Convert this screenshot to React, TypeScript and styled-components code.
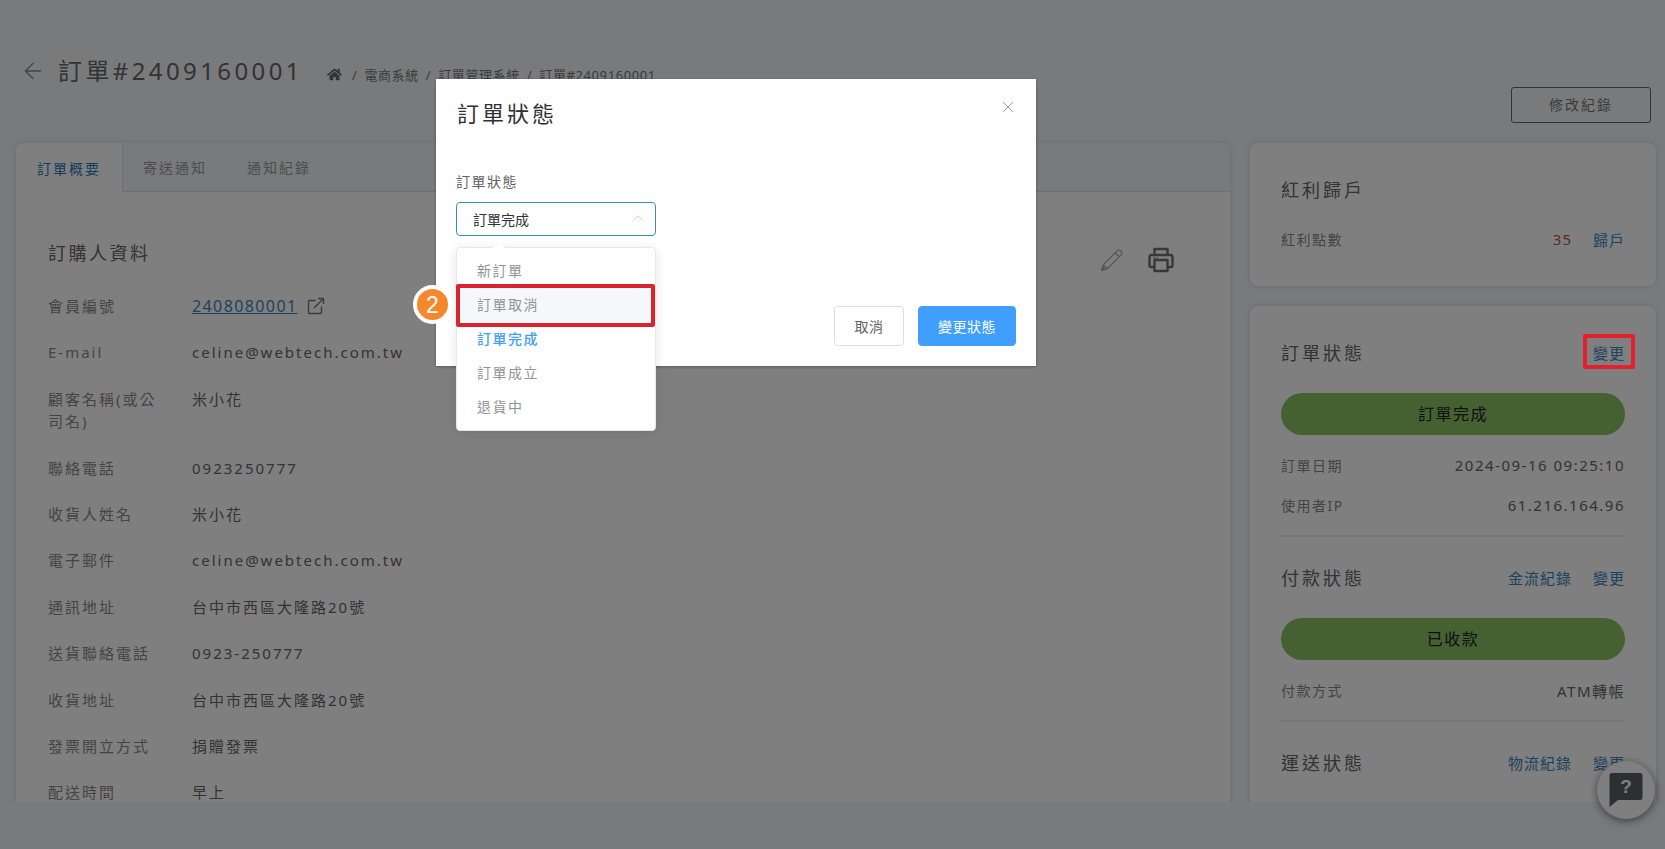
import React from 'react';
import styled, { createGlobalStyle } from 'styled-components';
import { ArrowLeft, ChevronUp, X } from 'lucide-react';
import { FaHome } from 'react-icons/fa';

const FONT = `"Noto Sans", "Noto Sans CJK TC", sans-serif`;

const GlobalStyle = createGlobalStyle`
  html, body {
    margin: 0;
    padding: 0;
    height: 100%;
    overflow: hidden;
    font-family: ${FONT};
    background: #f3f4f8;
  }
  * { box-sizing: border-box; }
`;

const Page = styled.div`
  position: relative;
  width: 1665px;
  height: 849px;
  overflow: hidden;
  background: #f3f4f8;
`;

const Viewport = styled.div`
  height: 802px;
  overflow: hidden;
  padding: 0 9px 0 16px;
`;

const Header = styled.header`
  display: flex;
  justify-content: space-between;
  align-items: flex-start;
  height: 143px;
  padding: 50px 5px 0 4px;
`;

const TitleRow = styled.div`
  display: flex;
  align-items: center;
  height: 42px;
`;

const BackIcon = styled(ArrowLeft)`
  width: 26px;
  height: 26px;
  color: #888;
  margin-right: 12px;
`;

const PageTitle = styled.h1`
  margin: 0 24px 0 0;
  font-size: 24px;
  line-height: 42px;
  font-weight: 400;
  letter-spacing: 3.4px;
  color: #666;
`;

const Breadcrumb = styled.nav`
  display: flex;
  align-items: center;
  gap: 7px;
  padding-top: 7px;
  font-size: 13px;
  letter-spacing: 0.6px;
  color: #777;
`;

const HomeIcon = styled(FaHome)`
  width: 15px;
  height: 15px;
  color: #666;
  margin-right: 3px;
`;

const OutlineButton = styled.button`
  width: 140px;
  height: 36px;
  margin-top: 37px;
  padding: 0 0 2px;
  border: 1px solid #666;
  border-radius: 3px;
  background: transparent;
  font-family: ${FONT};
  font-size: 14px;
  letter-spacing: 2px;
  color: #777;
`;

const Columns = styled.div`
  display: flex;
  gap: 20px;
  align-items: flex-start;
`;

const MainCard = styled.section`
  width: 1214px;
  flex: none;
  background: #fff;
  border-radius: 8px 8px 0 0;
  box-shadow: 0 0 6px rgba(0, 0, 0, 0.12);
`;

const TabBar = styled.div`
  display: flex;
  height: 49px;
  background: #f3f4f8;
  border-bottom: 1px solid #dcdfe6;
  border-radius: 8px 8px 0 0;
`;

const Tab = styled.div<{ $active?: boolean }>`
  display: flex;
  align-items: center;
  justify-content: center;
  height: ${(p) => (p.$active ? '49px' : '48px')};
  padding: ${(p) => (p.$active ? '0 21px' : '0 20px')};
  font-size: 14px;
  letter-spacing: 2px;
  color: ${(p) => (p.$active ? '#2a78b8' : '#999')};
  background: ${(p) => (p.$active ? '#fff' : 'transparent')};
  border-right: ${(p) => (p.$active ? '1px solid #dcdfe6' : 'none')};
  border-radius: ${(p) => (p.$active ? '8px 0 0 0' : '0')};
`;

const CardBody = styled.div`
  padding: 42px 32px 0;
`;

const SectionHeader = styled.div`
  display: flex;
  justify-content: space-between;
  align-items: center;
  height: 36px;
  margin-bottom: 13px;
`;

const SectionTitle = styled.h2`
  margin: 0;
  font-size: 18px;
  font-weight: 400;
  letter-spacing: 2.5px;
  color: #666;
`;

const ActionIcons = styled.div`
  display: flex;
  align-items: center;
  gap: 23px;
  padding-right: 24px;
  margin-top: 16px;
`;

const InfoRow = styled.div`
  display: flex;
  padding: 12px 0;
  font-size: 15px;
  line-height: 22.4px;
  letter-spacing: 2px;
`;

const InfoLabel = styled.div`
  width: 112px;
  margin-right: 32px;
  flex: none;
  color: #888;
`;

const InfoValue = styled.div`
  color: #666;
`;

const MemberLink = styled.a`
  display: inline-flex;
  align-items: center;
  gap: 9px;
  font-size: 16px;
  letter-spacing: 1.4px;
  color: #3a86c0;
  text-decoration: underline;
  svg {
    color: #777;
  }
`;

const Sidebar = styled.aside`
  width: 406px;
  flex: none;
  display: flex;
  flex-direction: column;
  gap: 20px;
`;

const SideCard = styled.section<{ $open?: boolean }>`
  background: #fff;
  border-radius: ${(p) => (p.$open ? '8px 8px 0 0' : '8px')};
  padding: 30px 31px ${(p) => (p.$open ? '40px' : '0')} 31px;
  min-height: 143px;
  box-shadow: 0 0 6px rgba(0, 0, 0, 0.12);
`;

const SideHeading = styled.div`
  display: flex;
  align-items: center;
  justify-content: space-between;
  height: 32px;
`;

const SideTitle = styled.h3`
  margin: 0;
  font-size: 18px;
  font-weight: 400;
  letter-spacing: 3px;
  color: #666;
`;

const LinkGroup = styled.div`
  display: flex;
  gap: 21px;
`;

const TextLink = styled.a`
  font-size: 15px;
  letter-spacing: 1px;
  color: #3a86c0;
`;

const SideRow = styled.div<{ $first?: boolean }>`
  display: flex;
  align-items: center;
  justify-content: space-between;
  height: 24px;
  margin-top: ${(p) => (p.$first ? '22px' : '16px')};
  font-size: 14px;
  letter-spacing: 1.5px;
  color: #888;
`;

const SideValue = styled.span`
  font-size: 15px;
  letter-spacing: 1.5px;
  color: #666;
`;

const RedPoints = styled.span`
  margin-right: 21px;
  font-size: 15px;
  letter-spacing: 1px;
  color: #c0504d;
`;

const PointsGroup = styled.div`
  display: flex;
  align-items: center;
`;

const StatusPill = styled.div`
  display: flex;
  align-items: center;
  justify-content: center;
  height: 42px;
  margin: 25px 0 18px;
  padding-bottom: 2px;
  border-radius: 21px;
  background: #8ac062;
  font-size: 16px;
  letter-spacing: 1.5px;
  color: #222;
  & + div {
    margin-top: 0;
  }
`;

const Divider = styled.hr`
  height: 2px;
  margin: 18px 0 24px;
  border: none;
  background: #eee;
`;

const HelpButton = styled.div`
  position: absolute;
  right: 10px;
  bottom: 30px;
  display: flex;
  align-items: center;
  justify-content: center;
  width: 58px;
  height: 58px;
  border-radius: 50%;
  background: #fff;
  box-shadow: 0 2px 8px rgba(0, 0, 0, 0.5);
`;

const Overlay = styled.div`
  position: absolute;
  inset: 0;
  padding: 79px 0 0 436px;
  background: rgba(0, 0, 0, 0.5);
`;

const Modal = styled.div`
  display: flex;
  flex-direction: column;
  width: 600px;
  height: 287px;
  padding: 15px 20px 20px;
  background: #fff;
  box-shadow: 0 1px 3px rgba(0, 0, 0, 0.3);
`;

const ModalHead = styled.div`
  display: flex;
  align-items: center;
  justify-content: space-between;
  height: 36px;
  margin-bottom: 41px;
`;

const ModalTitle = styled.h2`
  margin: 0 0 0 1px;
  font-size: 22px;
  font-weight: 400;
  letter-spacing: 3px;
  color: #303133;
`;

const CloseIcon = styled(X)`
  width: 18px;
  height: 18px;
  margin: -10px -1px 0 0;
  color: #909399;
`;

const FieldLabel = styled.label`
  font-size: 14px;
  line-height: 22px;
  letter-spacing: 1.5px;
  color: #606266;
`;

const SelectBox = styled.div`
  position: relative;
  width: 200px;
  margin-top: 9px;
`;

const SelectInput = styled.div`
  display: flex;
  align-items: center;
  justify-content: space-between;
  height: 34px;
  padding: 0 8px 0 16px;
  border: 1px solid #3c8dbc;
  border-radius: 4px;
  font-size: 14px;
  color: #303133;
`;

const SelectArrow = styled(ChevronUp)`
  width: 18px;
  height: 18px;
  margin-top: -3px;
  color: #c0c4cc;
`;

const Dropdown = styled.ul`
  position: absolute;
  top: 45px;
  left: 0;
  z-index: 2;
  width: 200px;
  margin: 0;
  padding: 6px 0;
  list-style: none;
  background: #fff;
  border: 1px solid #e4e7ed;
  border-radius: 4px;
  box-shadow: 0 2px 12px rgba(0, 0, 0, 0.1);
  &::before {
    content: '';
    position: absolute;
    top: -6px;
    left: 36px;
    border: 6px solid transparent;
    border-top: 0;
    border-bottom-color: #fff;
  }
`;

const Option = styled.li<{ $hover?: boolean; $selected?: boolean }>`
  position: relative;
  height: 34px;
  padding: 0 20px;
  font-size: 14px;
  line-height: 34px;
  letter-spacing: 1.5px;
  font-weight: ${(p) => (p.$selected ? 500 : 400)};
  color: ${(p) => (p.$selected ? '#409eff' : '#909399')};
  background: ${(p) => (p.$hover ? '#f5f7fa' : 'transparent')};
`;

const OptionMark = styled.span`
  position: absolute;
  inset: -4px 0 -5px -1px;
  border: 4px solid #d8242f;
  border-radius: 2px;
`;

const StepBadge = styled.span`
  position: absolute;
  top: -3px;
  left: -44px;
  display: flex;
  align-items: center;
  justify-content: center;
  width: 39px;
  height: 39px;
  border: 4px solid #fff;
  border-radius: 50%;
  background: #f7872c;
  font-family: "Liberation Sans", sans-serif;
  font-size: 23px;
  letter-spacing: 0;
  color: #fff;
`;

const ModalFooter = styled.div`
  display: flex;
  justify-content: flex-end;
  gap: 14px;
  margin-top: auto;
`;

const FooterButton = styled.button<{ $primary?: boolean }>`
  width: ${(p) => (p.$primary ? '98px' : '70px')};
  height: 40px;
  padding: 0;
  border: 1px solid ${(p) => (p.$primary ? '#409eff' : '#dcdfe6')};
  border-radius: 4px;
  background: ${(p) => (p.$primary ? '#409eff' : '#fff')};
  font-family: ${FONT};
  font-size: 14px;
  letter-spacing: 0.5px;
  color: ${(p) => (p.$primary ? '#fff' : '#606266')};
`;

const LinkMark = styled.span`
  position: absolute;
  left: 1583px;
  top: 334px;
  width: 52px;
  height: 35px;
  border: 4px solid #e3202c;
  border-radius: 2px;
`;

const infoRows = [
  ['E-mail', 'celine@webtech.com.tw'],
  ['顧客名稱(或公司名)', '米小花'],
  ['聯絡電話', '0923250777'],
  ['收貨人姓名', '米小花'],
  ['電子郵件', 'celine@webtech.com.tw'],
  ['通訊地址', '台中市西區大隆路20號'],
  ['送貨聯絡電話', '0923-250777'],
  ['收貨地址', '台中市西區大隆路20號'],
  ['發票開立方式', '捐贈發票'],
  ['配送時間', '早上'],
];

const statusOptions = ['新訂單', '訂單取消', '訂單完成', '訂單成立', '退貨中'];

const PencilIcon = () => (
  <svg width="26" height="26" viewBox="0 0 28 28" fill="none" stroke="#aaa" strokeWidth="1.4" strokeLinejoin="round">
    <path d="M3 25l1.6-6L19.5 4.2a2.8 2.8 0 0 1 4 0l.3.3a2.8 2.8 0 0 1 0 4L9 23.4z" />
    <path d="M4.6 19l4.4 4.4M17.5 6.2l4.3 4.3" />
    <path d="M3 25l3.6-1 -2.6-2.6z" fill="#aaa" />
  </svg>
);

const PrinterIcon = () => (
  <svg width="26" height="26" viewBox="0 0 26 26" fill="none" stroke="#707070" strokeWidth="2.4" strokeLinejoin="round">
    <path d="M6.5 8V2h13v6" />
    <path d="M6.5 20H3a1.5 1.5 0 0 1-1.5-1.5V10A2 2 0 0 1 3.500 8h19a2 2 0 0 1 2 2v8.500A1.500 1.500 0 0 1 23 20h-3.500" />
    <rect x="6.500" y="13" width="13" height="11" />
    <path d="M5.500 11h2M9 11h1" strokeWidth="1.400" />
  </svg>
);

const ExternalIcon = () => (
  <svg width="18" height="18" viewBox="0 0 18 18" fill="none" stroke="currentColor" strokeWidth="1.400" strokeLinejoin="round">
    <path d="M8.500 3.500H2.500a1 1 0 0 0-1 1V15.500a1 1 0 0 0 1 1H13.500a1 1 0 0 0 1-1V9.500" />
    <path d="M7 11L16.500 1.500M11 1.500h5.500V7" />
  </svg>
);

const HelpIcon = () => (
  <svg width="34" height="34" viewBox="0 0 34 34">
    <path d="M3 0h28a2.500 2.500 0 0 1 2.500 2.500v22a2.500 2.500 0 0 1-2.500 2.500H9l-8.500 7V2.500A2.500 2.500 0 0 1 3 0z" fill="#5a6066" />
    <text x="17" y="20" textAnchor="middle" fontSize="19" fontWeight="700" fontFamily="Liberation Sans, sans-serif" fill="#fff">?</text>
  </svg>
);

const App: React.FC = () => {
  return (
    <Page>
      <GlobalStyle />
      <Viewport>
        <Header>
          <TitleRow>
            <BackIcon strokeWidth={1.2} />
            <PageTitle>訂單#2409160001</PageTitle>
            <Breadcrumb>
              <HomeIcon />
              <span>/</span>
              <span>電商系統</span>
              <span>/</span>
              <span>訂單管理系統</span>
              <span>/</span>
              <span>訂單#2409160001</span>
            </Breadcrumb>
          </TitleRow>
          <OutlineButton>修改紀錄</OutlineButton>
        </Header>
        <Columns>
          <MainCard>
            <TabBar>
              <Tab $active>訂單概要</Tab>
              <Tab>寄送通知</Tab>
              <Tab>通知紀錄</Tab>
            </TabBar>
            <CardBody>
              <SectionHeader>
                <SectionTitle>訂購人資料</SectionTitle>
                <ActionIcons>
                  <PencilIcon />
                  <PrinterIcon />
                </ActionIcons>
              </SectionHeader>
              <InfoRow>
                <InfoLabel>會員編號</InfoLabel>
                <InfoValue>
                  <MemberLink>
                    2408080001
                    <ExternalIcon />
                  </MemberLink>
                </InfoValue>
              </InfoRow>
              {infoRows.map(([label, value]) => (
                <InfoRow key={label + value}>
                  <InfoLabel>{label}</InfoLabel>
                  <InfoValue>{value}</InfoValue>
                </InfoRow>
              ))}
            </CardBody>
          </MainCard>
          <Sidebar>
            <SideCard>
              <SideHeading>
                <SideTitle>紅利歸戶</SideTitle>
              </SideHeading>
              <SideRow $first>
                <span>紅利點數</span>
                <PointsGroup>
                  <RedPoints>35</RedPoints>
                  <TextLink>歸戶</TextLink>
                </PointsGroup>
              </SideRow>
            </SideCard>
            <SideCard $open>
              <SideHeading>
                <SideTitle>訂單狀態</SideTitle>
                <LinkGroup>
                  <TextLink>變更</TextLink>
                </LinkGroup>
              </SideHeading>
              <StatusPill>訂單完成</StatusPill>
              <SideRow>
                <span>訂單日期</span>
                <SideValue>2024-09-16 09:25:10</SideValue>
              </SideRow>
              <SideRow>
                <span>使用者IP</span>
                <SideValue>61.216.164.96</SideValue>
              </SideRow>
              <Divider />
              <SideHeading>
                <SideTitle>付款狀態</SideTitle>
                <LinkGroup>
                  <TextLink>金流紀錄</TextLink>
                  <TextLink>變更</TextLink>
                </LinkGroup>
              </SideHeading>
              <StatusPill>已收款</StatusPill>
              <SideRow>
                <span>付款方式</span>
                <SideValue>ATM轉帳</SideValue>
              </SideRow>
              <Divider />
              <SideHeading>
                <SideTitle>運送狀態</SideTitle>
                <LinkGroup>
                  <TextLink>物流紀錄</TextLink>
                  <TextLink>變更</TextLink>
                </LinkGroup>
              </SideHeading>
            </SideCard>
          </Sidebar>
        </Columns>
      </Viewport>
      <HelpButton>
        <HelpIcon />
      </HelpButton>
      <Overlay>
        <Modal>
          <ModalHead>
            <ModalTitle>訂單狀態</ModalTitle>
            <CloseIcon strokeWidth={1.2} />
          </ModalHead>
          <FieldLabel>訂單狀態</FieldLabel>
          <SelectBox>
            <SelectInput>
              訂單完成
              <SelectArrow strokeWidth={1.2} />
            </SelectInput>
            <Dropdown>
              {statusOptions.map((option) => (
                <Option key={option} $hover={option === '訂單取消'} $selected={option === '訂單完成'}>
                  {option}
                  {option === '訂單取消' && (
                    <>
                      <OptionMark />
                      <StepBadge>2</StepBadge>
                    </>
                  )}
                </Option>
              ))}
            </Dropdown>
          </SelectBox>
          <ModalFooter>
            <FooterButton>取消</FooterButton>
            <FooterButton $primary>變更狀態</FooterButton>
          </ModalFooter>
        </Modal>
        <LinkMark />
      </Overlay>
    </Page>
  );
};

export default App;
